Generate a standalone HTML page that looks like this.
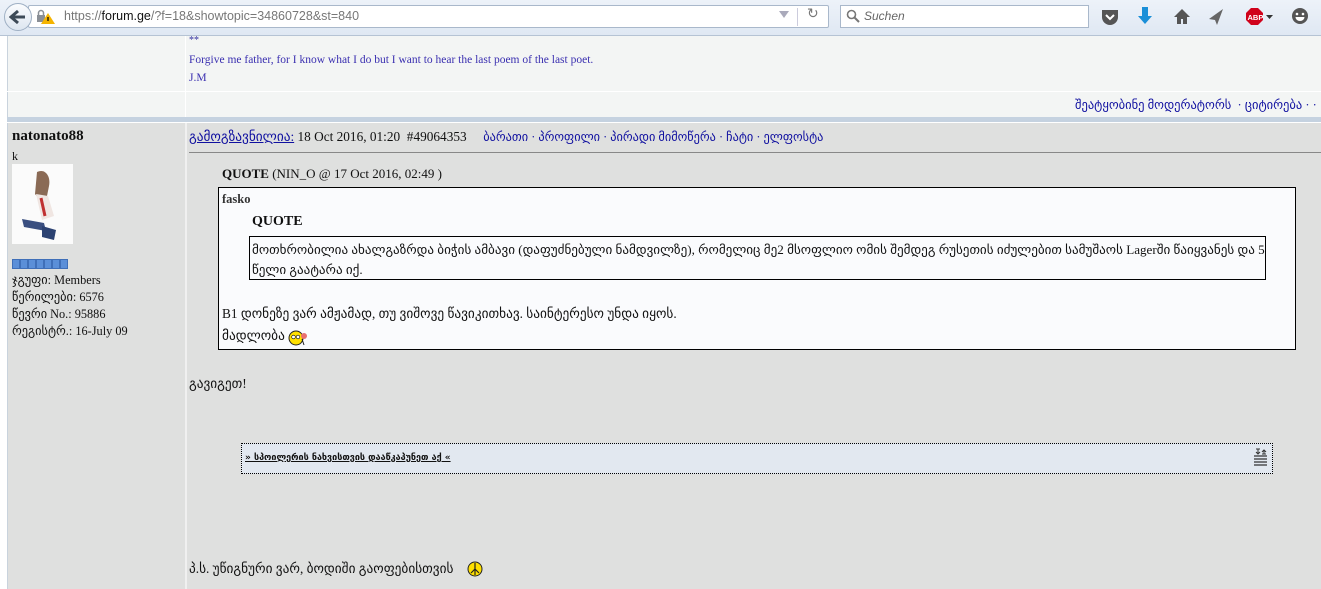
<!DOCTYPE html>
<html><head><meta charset="utf-8">
<style>
*{margin:0;padding:0;box-sizing:border-box}
body{width:1321px;height:589px;overflow:hidden;background:#fff;font-family:"Liberation Serif","DejaVu Serif","DejaVu Sans",serif;font-size:13px;color:#111;position:relative}
.a{position:absolute;white-space:nowrap}
.g{font-family:"DejaVu Sans",sans-serif;font-size:11.5px}
.t{font-family:'Liberation Serif','DejaVu Sans',serif;font-size:13.3px}
</style></head><body>
<div class="a" style="left:0;top:0;width:1321px;height:36px;background:linear-gradient(#edf2f9,#dfe8f3);border-bottom:1px solid #b5c3d4"></div>
<div class="a" style="left:28px;top:5px;width:801px;height:23px;background:#fff;border:1px solid #a9b8cb;border-radius:2px"></div>
<div class="a" style="left:4px;top:3px;width:28px;height:28px;border-radius:50%;background:linear-gradient(#fbfcfe,#dde6f0);border:1px solid #9fb0c4"></div>
<svg class="a" style="left:9px;top:9px" width="18" height="16"><path d="M9 2L2 8L9 14M2 8H16" stroke="#3d4a57" stroke-width="3" fill="none"/></svg>
<svg class="a" style="left:36px;top:9px" width="20" height="16"><rect x="1" y="6" width="8" height="7" fill="#8a8f96"/><path d="M2.5 6V4a2.5 2.5 0 0 1 5 0v2" stroke="#8a8f96" stroke-width="1.5" fill="none"/><path d="M12 4L19 15H5z" fill="#f5b400"/><path d="M12 8v4" stroke="#000" stroke-width="1.2"/></svg>
<div class="a" style="left:64px;top:9px;font-family:'Liberation Sans',sans-serif;font-size:12.5px;color:#777">https://<span style="color:#111">forum.ge</span>/?f=18&amp;showtopic=34860728&amp;st=840</div>
<div class="a" style="left:779px;top:11px;width:0;height:0;border-left:5px solid transparent;border-right:5px solid transparent;border-top:7px solid #aab"></div>
<div class="a" style="left:797px;top:8px;width:1px;height:18px;background:#ccd"></div>
<div class="a" style="left:807px;top:6px;font-family:'DejaVu Sans';font-size:14px;color:#777">↻</div>
<div class="a" style="left:840px;top:5px;width:249px;height:23px;background:#fff;border:1px solid #a9b8cb"></div>
<svg class="a" style="left:846px;top:9px" width="14" height="14"><circle cx="5.5" cy="5.5" r="4" stroke="#777" stroke-width="1.6" fill="none"/><path d="M8.5 8.5L13 13" stroke="#777" stroke-width="2"/></svg>
<div class="a" style="left:864px;top:9px;font-family:'Liberation Sans';font-size:12px;font-style:italic;color:#666">Suchen</div>
<svg class="a" style="left:1101px;top:8px" width="18" height="18"><path d="M1 2h16v7a8 8 0 0 1-16 0z" fill="#555"/><path d="M5 7l4 4 4-4" stroke="#fff" stroke-width="2" fill="none"/></svg>
<svg class="a" style="left:1137px;top:6px" width="16" height="20"><path d="M5 1h6v9h4L8 18 1 10h4z" fill="#1a8fd8"/></svg>
<svg class="a" style="left:1173px;top:8px" width="18" height="17"><path d="M9 1L1 9h3v7h4v-5h2v5h4V9h3z" fill="#555"/></svg>
<svg class="a" style="left:1208px;top:8px" width="16" height="18"><path d="M15 1L1 11l6 1 2 5z" fill="#666"/></svg>
<svg class="a" style="left:1245px;top:7px" width="30" height="20"><polygon points="6,1 13,1 18,6 18,13 13,18 6,18 1,13 1,6" fill="#d0021b"/><text x="2.5" y="13" font-size="7.5" font-family="Liberation Sans" font-weight="bold" fill="#fff">ABP</text><path d="M21 8h7l-3.5 4z" fill="#333"/></svg>
<svg class="a" style="left:1290px;top:7px" width="20" height="20"><circle cx="10" cy="9" r="8" fill="#555"/><circle cx="7" cy="7" r="1.3" fill="#fff"/><circle cx="13" cy="7" r="1.3" fill="#fff"/><path d="M5.5 10a4.5 4 0 0 0 9 0z" fill="#fff"/></svg>

<div class="a" style="left:7px;top:36px;width:1314px;height:81px;background:#f3f5f4"></div>
<div class="a" style="left:7px;top:36px;width:1px;height:553px;background:#c9d3dd"></div>
<div class="a" style="left:185px;top:36px;width:1px;height:81px;background:#fff"></div>
<div class="a" style="left:7px;top:91px;width:1314px;height:1px;background:#fff"></div>
<div class="a" style="left:189px;top:35px;font-size:10px;color:#3030a0">**</div>
<div class="a" style="left:189px;top:54px;font-size:11.5px;color:#3a2fb0">Forgive me father, for I know what I do but I want to hear the last poem of the last poet.</div>
<div class="a" style="left:189px;top:72px;font-size:11.5px;color:#3a2fb0">J.M</div>
<div class="a t" style="left:1075px;top:97px;color:#1010a0;font-size:12.5px">შეატყობინე მოდერატორს &nbsp;· ციტირება · ·</div>
<div class="a" style="left:7px;top:117px;width:1314px;height:6px;background:#c5d2e0;border-bottom:1px solid #fff"></div>

<div class="a" style="left:8px;top:123px;width:1313px;height:466px;background:#dfe0df"></div>
<div class="a" style="left:185px;top:123px;width:2px;height:466px;background:#f0f0f0"></div>
<div class="a" style="left:12px;top:128px;font-family:'Liberation Serif',serif;font-size:15px;font-weight:bold">natonato88</div>
<div class="a" style="left:12px;top:149px;font-size:12px">k</div>
<svg class="a" style="left:12px;top:164px" width="61" height="80"><rect width="61" height="80" fill="#fbfbfb"/><path d="M25 8c8-4 14 4 12 14l-2 10c-4 3-9 2-12-2z" fill="#8a6a55"/><path d="M24 30l12 2 6 20-12 4z" fill="#f0e6e2"/><path d="M29 34l4 18" stroke="#c03030" stroke-width="3"/><path d="M10 55l22 4 2 8-22-4z" fill="#3a4f80"/><path d="M30 62l14 4-2 10-12-3z" fill="#2c4272"/></svg>
<svg class="a" style="left:12px;top:259px" width="60" height="11"><g fill="#5b8fd8" stroke="#3f6fb8"><rect x=".5" y=".5" width="7" height="9"/><rect x="8.5" y=".5" width="7" height="9"/><rect x="16.5" y=".5" width="7" height="9"/><rect x="24.5" y=".5" width="7" height="9"/><rect x="32.5" y=".5" width="7" height="9"/><rect x="40.5" y=".5" width="7" height="9"/><rect x="48.5" y=".5" width="7" height="9"/></g></svg>
<div class="a t" style="left:12px;top:272px;font-size:12.3px;line-height:17px;white-space:pre">ჯგუფი: Members
წერილები: 6576
წევრი No.: 95886
რეგისტრ.: 16-July 09</div>

<div class="a t" style="left:189px;top:129px;font-size:13.3px"><span style="color:#1010a0;text-decoration:underline">გამოგზავნილია:</span> 18 Oct 2016, 01:20 &nbsp;#49064353 &nbsp; &nbsp; <span style="color:#1010a0;font-size:12.3px">ბარათი · პროფილი · პირადი მიმოწერა · ჩატი · ელფოსტა</span></div>
<div class="a" style="left:189px;top:152px;width:1132px;height:1px;background:#888"></div>

<div class="a" style="left:222px;top:166px;font-size:13px"><b>QUOTE</b> (NIN_O @ 17 Oct 2016, 02:49 )</div>
<div class="a" style="left:218px;top:187px;width:1078px;height:163px;background:#fafbfd;border:1px solid #000"></div>
<div class="a" style="left:222px;top:192px;font-size:12.5px;font-weight:bold;color:#333">fasko</div>
<div class="a" style="left:252px;top:214px;font-size:14px;font-weight:bold">QUOTE</div>
<div class="a" style="left:249px;top:236px;width:1017px;height:44px;border:1px solid #000"></div>
<div class="a t" style="left:252px;top:240px;line-height:20px;font-size:13.1px">მოთხრობილია ახალგაზრდა ბიჭის ამბავი (დაფუძნებული ნამდვილზე), რომელიც მე2 მსოფლიო ომის შემდეგ რუსეთის იძულებით სამუშაოს Lagerში წაიყვანეს და 5<br>წელი გაატარა იქ.</div>
<div class="a t" style="left:222px;top:306px">B1 დონეზე ვარ ამჟამად, თუ ვიშოვე წავიკითხავ. საინტერესო უნდა იყოს.</div>
<div class="a t" style="left:222px;top:328px">მადლობა</div>
<svg class="a" style="left:287px;top:326px" width="22" height="20"><circle cx="9" cy="12" r="7" fill="#ffe000" stroke="#222"/><circle cx="6.5" cy="11" r="1.8" fill="#fff" stroke="#000" stroke-width=".6"/><circle cx="11" cy="11" r="1.8" fill="#fff" stroke="#000" stroke-width=".6"/><circle cx="17" cy="10" r="3" fill="#e87070"/><path d="M15 13l2 6" stroke="#222"/></svg>

<div class="a t" style="left:189px;top:376px">გავიგეთ!</div>

<div class="a" style="left:241px;top:443px;width:1032px;height:31px;background:#e2e8f0;border:1px dotted #000"></div>
<div class="a g" style="left:245px;top:453px;font-size:9px;font-weight:bold;text-decoration:underline;color:#111">» სპოილერის ნახვისთვის დააწკაპუნეთ აქ «</div>
<svg class="a" style="left:1252px;top:446px" width="17" height="24"><path d="M4 3h4M6 3v4M4 6l2 2 2-2M10 6l2-2 2 2M12 4v4M10 8h4" stroke="#333" stroke-width="1" fill="none"/><path d="M2 10h13M2 13h13M2 16h13M2 19h13" stroke="#333" stroke-width="1.3"/></svg>

<div class="a t" style="left:189px;top:561px">პ.ს. უწიგნური ვარ, ბოდიში გაოფებისთვის</div>
<svg class="a" style="left:467px;top:561px" width="16" height="16"><circle cx="8" cy="8" r="7" fill="#ffe000" stroke="#222"/><path d="M8 2v12M8 8l-4 4M8 8l4 4" stroke="#222" stroke-width="1.2"/></svg>
</body></html>
